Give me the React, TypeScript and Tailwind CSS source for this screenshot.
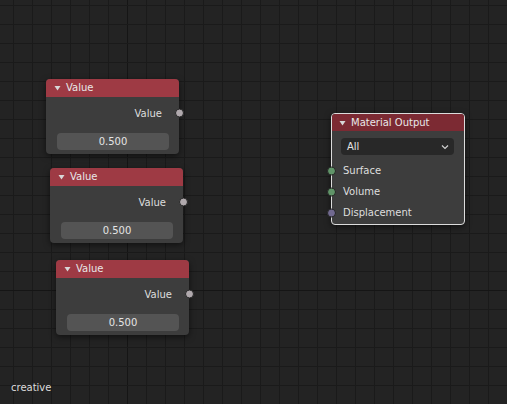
import React from "react";

const W = 507;
const H = 404;

function Grid() {
  const xs: number[] = [];
  const ys: number[] = [];
  for (let x = 13; x < W; x += 19) xs.push(x);
  for (let y = 5; y < H; y += 19) ys.push(y);
  return (
    <svg className="absolute inset-0" width={W} height={H}>
      {xs.map((x) => (
        <rect key={"x" + x} x={x} y={0} width={1} height={H} fill={x === 127 ? "#151515" : "#1a1a1a"} />
      ))}
      {ys.map((y) => (
        <rect key={"y" + y} x={0} y={y} width={W} height={1} fill={y === 290 ? "#151515" : "#1a1a1a"} />
      ))}
    </svg>
  );
}

function Tri() {
  return (
    <svg width="7" height="6" viewBox="0 0 7 6" className="shrink-0">
      <path d="M0.5 1 L6.5 1 L3.5 5.5 Z" fill="#d8d8d8" />
    </svg>
  );
}

function Socket({ color, side }: { color: string; side: "left" | "right" }) {
  return (
    <span
      className={
        "absolute top-1/2 -translate-y-1/2 w-[9px] h-[9px] rounded-full border border-[#262626] " +
        (side === "right" ? "right-[-5px]" : "left-[-5px]")
      }
      style={{ background: color }}
    />
  );
}

function ValueNode({ x, y }: { x: number; y: number }) {
  return (
    <div
      className="absolute w-[133px] rounded-[4px] bg-[#3d3d3d] shadow-[0_2px_6px_rgba(0,0,0,0.55)] flex flex-col"
      style={{ left: x, top: y }}
    >
      <div className="h-[18px] rounded-t-[4px] bg-[#9e3a44] flex items-center gap-[5px] pl-[8px] text-[#e8e8e8]">
        <Tri />
        <span className="text-[10px] leading-none">Value</span>
      </div>
      <div className="relative h-[20px] mt-[6px] flex items-center justify-end pr-[17px] text-[10px] text-[#dedede]">
        Value
        <Socket color="#b0a9ad" side="right" />
      </div>
      <div className="mt-[10px] mx-[11px] mr-[10px] h-[17px] rounded-[4px] bg-[#545454] flex items-center justify-center text-[10px] text-[#e4e4e4]">
        0.500
      </div>
      <div className="h-[4px]" />
    </div>
  );
}

function MaterialOutput({ x, y }: { x: number; y: number }) {
  const rows: [string, string][] = [
    ["Surface", "#609468"],
    ["Volume", "#609468"],
    ["Displacement", "#71698f"],
  ];
  return (
    <div
      className="absolute w-[134px] rounded-[4px] bg-[#3d3d3d] border border-[#dcdcdc] shadow-[0_2px_6px_rgba(0,0,0,0.55)] flex flex-col"
      style={{ left: x, top: y }}
    >
      <div className="h-[17px] rounded-t-[3px] bg-[#7c2a33] flex items-center gap-[5px] pl-[7px] text-[#e8e8e8]">
        <Tri />
        <span className="text-[10px] leading-none">Material Output</span>
      </div>
      <div className="mt-[7px] ml-[9px] mr-[10px] h-[17px] rounded-[4px] bg-[#282828] flex items-center justify-between pl-[6px] pr-[5px] text-[10px] text-[#e4e4e4]">
        <span>All</span>
        <svg width="8" height="6" viewBox="0 0 8 6">
          <path d="M1 1.5 L4 4.5 L7 1.5" stroke="#d0d0d0" strokeWidth="1.2" fill="none" />
        </svg>
      </div>
      <div className="mt-[5px] flex flex-col">
        {rows.map(([label, c]) => (
          <div key={label} className="relative h-[21px] flex items-center pl-[11px] text-[10px] text-[#dedede]">
            {label}
            <Socket color={c} side="left" />
          </div>
        ))}
      </div>
      <div className="h-[1px]" />
    </div>
  );
}

export default function App() {
  return (
    <div
      className="relative w-[507px] h-[404px] overflow-hidden bg-[#232323]"
      style={{ fontFamily: '"DejaVu Sans", "Liberation Sans", sans-serif' }}
    >
      <Grid />
      <ValueNode x={46} y={79} />
      <ValueNode x={50} y={168} />
      <ValueNode x={56} y={260} />
      <MaterialOutput x={331} y={113} />
      <div className="absolute left-[11px] top-[380px] text-[10px] text-[#dcdcdc]">creative</div>
    </div>
  );
}
